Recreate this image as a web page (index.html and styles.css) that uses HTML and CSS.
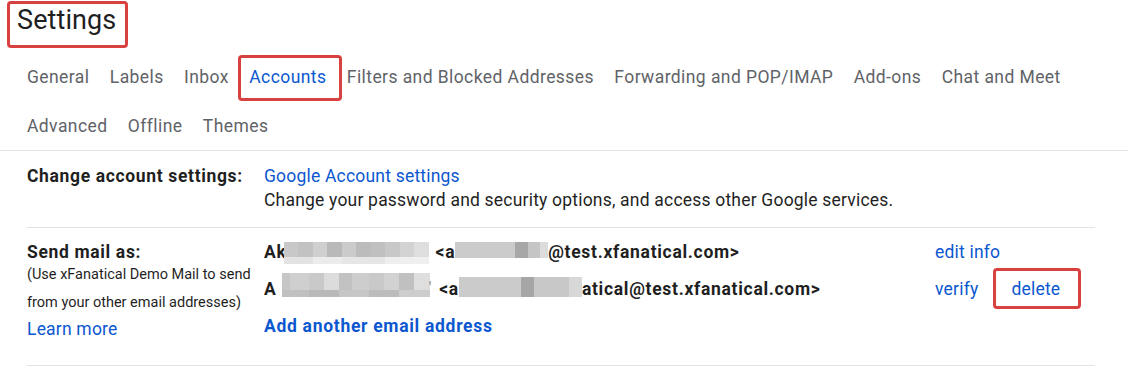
FILE: index.html
```html
<!DOCTYPE html>
<html lang="en">
<head>
<meta charset="utf-8">
<title>Settings</title>
<link rel="stylesheet" href="styles.css">
</head>
<body>
<div class="page">
  <header class="title-bar">
    <h1 class="title mark">Settings</h1>
  </header>
  <nav class="tabs">
    <div class="tab-row">
      <span class="tab">General</span>
      <span class="tab">Labels</span>
      <span class="tab">Inbox</span>
      <span class="tab tab-active"><span class="mark mark-tab">Accounts</span></span>
      <span class="tab">Filters and Blocked Addresses</span>
      <span class="tab">Forwarding and POP/IMAP</span>
      <span class="tab">Add-ons</span>
      <span class="tab">Chat and Meet</span>
    </div>
    <div class="tab-row">
      <span class="tab">Advanced</span>
      <span class="tab">Offline</span>
      <span class="tab">Themes</span>
    </div>
  </nav>
  <section class="settings">
    <div class="row row-account">
      <div class="label">Change account settings:</div>
      <div class="value">
        <a class="link">Google Account settings</a>
        <div class="desc">Change your password and security options, and access other Google services.</div>
      </div>
    </div>
    <div class="row row-send">
      <div class="label">
        <div>Send mail as:</div>
        <div class="hint">(Use xFanatical Demo Mail to send<br>from your other email addresses)</div>
        <a class="link">Learn more</a>
      </div>
      <div class="value">
        <div class="addr">
          <div class="addr-text">
            <span>Ak</span><span class="blur blur-name1"></span>
            <span class="lt">&lt;a</span><span class="blur blur-mail1"></span><span>@test.xfanatical.com&gt;</span>
          </div>
          <div class="actions"><a class="link">edit info</a></div>
        </div>
        <div class="addr">
          <div class="addr-text">
            <span>A</span><span class="blur blur-name2"></span><span class="tick">'</span>
            <span class="lt">&lt;a</span><span class="blur blur-mail2"></span><span>atical@test.xfanatical.com&gt;</span>
          </div>
          <div class="actions">
            <a class="link">verify</a>
            <a class="link link-delete"><span class="mark mark-delete">delete</span></a>
          </div>
        </div>
        <a class="link link-add">Add another email address</a>
      </div>
    </div>
  </section>
</div>
</body>
</html>
```

FILE: styles.css
```css
* { box-sizing: border-box; }

html, body {
  margin: 0;
  padding: 0;
  background: #ffffff;
}

body {
  font-family: Roboto, "Liberation Sans", Arial, sans-serif;
  color: #1f1f1f;
  width: 1128px;
  height: 366px;
  overflow: hidden;
}

.mark { position: relative; display: inline-block; }
.mark::after {
  content: "";
  position: absolute;
  border: 3px solid #d94141;
  border-radius: 4px;
  pointer-events: none;
}

.title-bar {
  height: 53px;
  padding-left: 17px;
}

.title {
  margin: 0;
  font-size: 27px;
  font-weight: 400;
  line-height: 40px;
  letter-spacing: 0.1px;
  color: #1f1f1f;
}
.title::after {
  top: 1px;
  bottom: -8px;
  left: -10px;
  right: -12px;
}

.tabs {
  padding-left: 16.8px;
  border-bottom: 1px solid #e6e6e6;
  height: 151px;
  margin-top: -53px;
  padding-top: 53px;
}

.tab-row {
  display: flex;
  height: 48px;
  align-items: center;
}
.tab-row + .tab-row { height: 49px; }

.tab {
  padding: 0 10.2px;
  font-size: 17.5px;
  letter-spacing: 0.42px;
  color: #5f6368;
  line-height: 24px;
  white-space: nowrap;
}
.tab-active { color: #0b57d0; }
.mark-tab::after {
  top: -10px;
  bottom: -12px;
  left: -11px;
  right: -16px;
}

.settings {
  margin: 0 33px 0 27px;
}

.row {
  display: grid;
  grid-template-columns: 237px 1fr;
  border-bottom: 1px solid #e3e3e3;
}

.row-account {
  padding: 13px 0 15px;
  font-size: 17.5px;
  line-height: 24px;
  letter-spacing: 0.2px;
}

.row-send {
  padding: 12px 0 24px;
  font-size: 17.5px;
  line-height: 24px;
  letter-spacing: 0.2px;
}

.label { font-weight: 700; letter-spacing: 0.65px; }
.label .hint {
  font-weight: 400;
  font-size: 14.5px;
  line-height: 28px;
  letter-spacing: 0;
  margin-top: -3px;
  color: #1f1f1f;
}
.label .link { font-weight: 400; letter-spacing: 0.2px; }

.link {
  color: #0b57d0;
  text-decoration: none;
  cursor: pointer;
}

.desc { color: #1f1f1f; }

.addr {
  display: flex;
  height: 24px;
  margin-bottom: 13px;
}

.addr-text {
  width: 671px;
  display: flex;
  align-items: flex-start;
  font-weight: 700;
  letter-spacing: 0.7px;
  white-space: pre;
}

.actions {
  display: flex;
  gap: 33px;
}

.link-add {
  font-weight: 700;
  letter-spacing: 0.7px;
  display: block;
  margin-top: 1px;
}

.mark-delete::after {
  top: -9px;
  bottom: -8px;
  left: -18px;
  right: -21px;
}

.blur { display: block; flex: none; }

.lt { margin-left: 7px; }
.tick { color: #9a9a9a; font-weight: 400; margin-left: -2px; }

.blur-name1 {
  width: 145px;
  height: 22px;
  margin-top: 2px;
  margin-left: -3px;
  background:
    linear-gradient(90deg, #c8c8c8 0 14px, #c2c2c2 14px 29px, #cfcfcf 29px 43px, #b9b9b9 43px 58px, #cbcbcb 58px 72px, #bcbcbc 72px 87px, #c0c0c0 87px 101px, #c8c8c8 101px 116px, #d3d3d3 116px 130px, #dedede 130px 145px) top / 100% 15px no-repeat,
    linear-gradient(90deg, #e3e3e3 0 29px, #ececec 29px 58px, #e6e6e6 58px 101px, #efefef 101px 145px) bottom / 100% 7px no-repeat;
}

.blur-mail1 {
  width: 93px;
  height: 16px;
  margin-top: 2px;
  background: linear-gradient(90deg, #cbcbcb 0 60px, #a7a7a7 60px 73px, #c5c5c5 73px 85px, #dcdcdc 85px 93px);
}

.blur-name2 {
  width: 148px;
  height: 24px;
  margin-top: -4px;
  margin-left: 6px;
  background:
    linear-gradient(90deg, #c6c6c6 0 8px, #cfcfcf 8px 27px, #c9c9c9 27px 42px, #dcdcdc 42px 57px, #c2c2c2 57px 70px, #cdcdcd 70px 87px, #c9c9c9 87px 102px, #d2d2d2 102px 117px, #c0c0c0 117px 132px, #dedede 132px 148px) top / 100% 17px no-repeat,
    linear-gradient(90deg, #c0c0c0 0 27px, #b9b9b9 27px 57px, #c6c6c6 57px 87px, #bcbcbc 87px 117px, #cdcdcd 117px 148px) bottom / 100% 7px no-repeat;
}

.blur-mail2 {
  width: 123px;
  height: 20px;
  margin-top: 0;
  background: linear-gradient(90deg, #cbcbcb 0 62px, #a6a6a6 62px 75px, #c8c8c8 75px 110px, #d8d8d8 110px 123px);
}
```
